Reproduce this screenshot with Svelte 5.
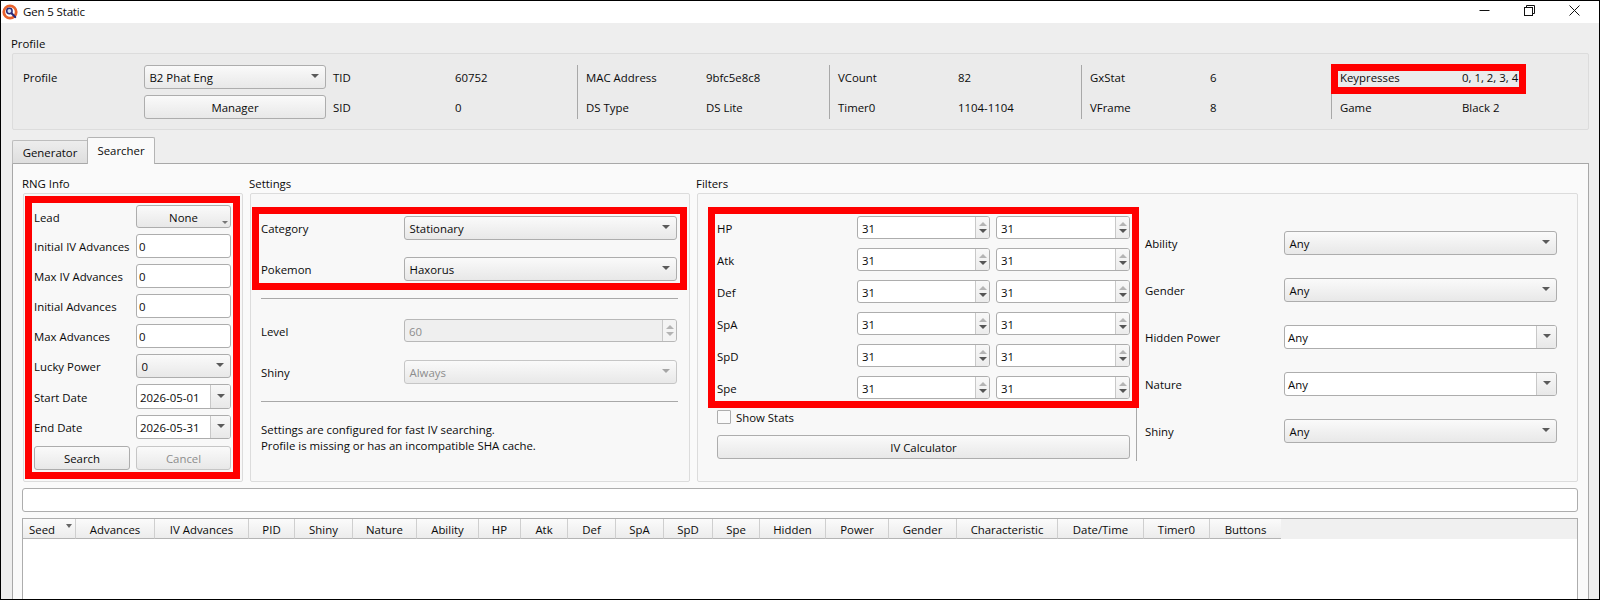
<script>
	const infoBlocks = [
		{ a: 'MAC Address', av: '9bfc5e8c8', b: 'DS Type', bv: 'DS Lite' },
		{ a: 'VCount', av: '82', b: 'Timer0', bv: '1104-1104' },
		{ a: 'GxStat', av: '6', b: 'VFrame', bv: '8' },
		{ a: 'Keypresses', av: '0, 1, 2, 3, 4', b: 'Game', bv: 'Black 2' }
	];
	const advances = ['Initial IV Advances', 'Max IV Advances', 'Initial Advances', 'Max Advances'];
	const stats = ['HP', 'Atk', 'Def', 'SpA', 'SpD', 'Spe'];
	const extras = [
		{ label: 'Ability', editable: false },
		{ label: 'Gender', editable: false },
		{ label: 'Hidden Power', editable: true },
		{ label: 'Nature', editable: true },
		{ label: 'Shiny', editable: false }
	];
	const columns = [
		['Advances', 79], ['IV Advances', 94], ['PID', 46], ['Shiny', 58], ['Nature', 64], ['Ability', 62],
		['HP', 42], ['Atk', 47], ['Def', 48], ['SpA', 48], ['SpD', 49], ['Spe', 47], ['Hidden', 66],
		['Power', 63], ['Gender', 68], ['Characteristic', 101], ['Date/Time', 86], ['Timer0', 66], ['Buttons', 71]
	];
</script>

{#snippet combo(text, disabled = false)}
	<div class="combo" class:disabled>
		<span>{text}</span>
		<i class="arrow"></i>
	</div>
{/snippet}

{#snippet editCombo(text, btn = 20)}
	<div class="edit-combo">
		<span>{text}</span>
		<div class="drop" style="width: {btn}px"><i class="arrow"></i></div>
	</div>
{/snippet}

{#snippet spin(text, disabled = false)}
	<div class="spin" class:disabled>
		<span>{text}</span>
		<div class="spin-btns">
			<i class="up"></i>
			<i class="down" class:faint={disabled}></i>
		</div>
	</div>
{/snippet}

<div class="window">
	<header class="titlebar">
		<svg class="app-icon" width="16" height="16" viewBox="0 0 16 16">
			<circle cx="8" cy="8" r="6.2" fill="#fff" stroke="#e8622c" stroke-width="2.8" />
			<circle cx="7.4" cy="7" r="2.7" fill="#cfe0f2" stroke="#2b2a78" stroke-width="1.5" />
			<path d="M9.5 9.2 L13.2 13" stroke="#2b2a78" stroke-width="2.2" stroke-linecap="round" />
		</svg>
		<div class="title">Gen 5 Static</div>
		<div class="controls">
			<svg width="45" height="11" viewBox="0 0 45 11"><path d="M17.5 5.5 H27.5" stroke="#111" /></svg>
			<svg width="45" height="11" viewBox="0 0 45 11" fill="none" stroke="#111">
				<rect x="17.5" y="2.5" width="8" height="8" />
				<path d="M19.5 2.5 V0.5 H27.5 V8.5 H25.5" />
			</svg>
			<svg width="45" height="11" viewBox="0 0 45 11" fill="none" stroke="#111">
				<path d="M17.5 0.5 L27.5 10.5 M27.5 0.5 L17.5 10.5" />
			</svg>
		</div>
	</header>

	<main class="page">
		<div class="legend profile-legend">Profile</div>
		<section class="box profile">
			<div class="profile-main">
				<span>Profile</span>
				{@render combo('B2 Phat Eng')}
				<span></span>
				<button class="btn">Manager</button>
			</div>
			<div class="info first">
				<span>TID</span><span>60752</span>
				<span>SID</span><span>0</span>
			</div>
			{#each infoBlocks as b}
				<div class="info">
					<span>{b.a}</span><span>{b.av}</span>
					<span>{b.b}</span><span>{b.bv}</span>
				</div>
			{/each}
		</section>

		<nav class="tabs">
			<div class="tab">Generator</div>
			<div class="tab active">Searcher</div>
		</nav>

		<div class="pane">
			<div class="columns">
				<div>
					<div class="legend">RNG Info</div>
					<section class="box panel rng">
						<span>Lead</span>
						<button class="btn lead">None<i class="menu-arrow"></i></button>
						{#each advances as label}
							<span>{label}</span>
							<div class="edit">0</div>
						{/each}
						<span>Lucky Power</span>
						{@render combo('0')}
						<span>Start Date</span>
						{@render editCombo('2026-05-01')}
						<span>End Date</span>
						{@render editCombo('2026-05-31')}
						<button class="btn search">Search</button>
						<button class="btn search off">Cancel</button>
					</section>
				</div>

				<div>
					<div class="legend">Settings</div>
					<section class="box panel settings">
						<div class="form top">
							<span>Category</span>
							{@render combo('Stationary')}
							<span>Pokemon</span>
							{@render combo('Haxorus')}
						</div>
						<div class="rule first-rule"></div>
						<div class="form lower">
							<span>Level</span>
							{@render spin('60', true)}
							<span>Shiny</span>
							{@render combo('Always', true)}
						</div>
						<div class="rule"></div>
						<p class="note">
							Settings are configured for fast IV searching.<br />
							Profile is missing or has an incompatible SHA cache.
						</p>
					</section>
				</div>

				<div>
					<div class="legend">Filters</div>
					<section class="box panel filters">
						<div class="iv-side">
							<div class="iv-grid">
								{#each stats as s}
									<span>{s}</span>
									{@render spin('31')}
									{@render spin('31')}
								{/each}
							</div>
							<div class="check"><i></i><span>Show Stats</span></div>
							<button class="btn calc">IV Calculator</button>
						</div>
						<div class="vrule"></div>
						<div class="extra-grid">
							{#each extras as e}
								<span>{e.label}</span>
								{#if e.editable}
									{@render editCombo('Any')}
								{:else}
									{@render combo('Any')}
								{/if}
							{/each}
						</div>
					</section>
				</div>
			</div>

			<div class="edit progress"></div>

			<div class="table">
				<div class="thead">
					<div class="th seed"><span>Seed</span><i class="arrow"></i></div>
					{#each columns as [name, width]}
						<div class="th" style="width: {width}px"><span>{name}</span></div>
					{/each}
				</div>
			</div>
		</div>
	</main>

	<div class="mark" style="left: 1330px; top: 63px; width: 195px; height: 30px"></div>
	<div class="mark" style="left: 24px; top: 195px; width: 215px; height: 283px"></div>
	<div class="mark" style="left: 251px; top: 206px; width: 435px; height: 83px"></div>
	<div class="mark" style="left: 707px; top: 206px; width: 431px; height: 201px"></div>
</div>

<style>
	:global(body) { margin: 0; }
	.window {
		position: relative;
		box-sizing: border-box;
		width: 1600px;
		height: 600px;
		border: 1px solid #000;
		overflow: hidden;
		display: flex;
		flex-direction: column;
		background: #eeeeee;
		color: #0a0a0a;
		font: 11.4px/16px "Open Sans", "Noto Sans", sans-serif;
	}
	/* text sits a pixel low in its row, like the native widgets */
	span { padding-top: 2px; }
	.titlebar {
		height: 22px;
		flex: none;
		display: flex;
		align-items: center;
		padding-left: 1px;
		background: #fff;
	}
	.title { font-size: 11.5px; letter-spacing: -0.15px; }
	.app-icon { margin-right: 5px; }
	.controls {
		margin-left: auto;
		margin-right: 2px;
		margin-top: -4px;
		display: flex;
		align-items: center;
		height: 11px;
	}
	.controls svg { display: block; }

	.page {
		flex: 1;
		min-height: 0;
		display: flex;
		flex-direction: column;
		padding: 12px 10px 0 11px;
	}
	.legend { height: 16px; margin: 0 0 1px -1px; white-space: nowrap; }
	.profile-legend { height: 18px; margin-bottom: 0; line-height: 18px; }
	.box {
		box-sizing: border-box;
		border: 1px solid #dcdcdc;
		border-radius: 2px;
	}
	.profile {
		height: 77px;
		flex: none;
		display: flex;
		padding: 11px 0 0 10px;
		background: #ebebeb;
	}
	.profile-main {
		width: 310px;
		display: grid;
		grid-template-columns: 121px 182px;
		grid-template-rows: 24px 24px;
		row-gap: 6px;
		align-items: center;
	}
	.info {
		box-sizing: border-box;
		width: 252px;
		height: 54px;
		padding-left: 8px;
		border-left: 1px solid #a8a8a8;
		display: grid;
		grid-template-columns: 120px 1fr;
		grid-template-rows: 24px 24px;
		row-gap: 6px;
		align-items: center;
	}
	.info.first { width: 244px; padding: 0; border: 0; grid-template-columns: 122px 1fr; }
	.info:nth-child(5) { width: 250px; }
	.info:last-child { grid-template-columns: 122px 1fr; }

	.combo, .btn, .edit, .edit-combo, .spin {
		box-sizing: border-box;
		border: 1px solid #adadad;
		border-radius: 3px;
		height: 100%;
		min-width: 0;
		display: flex;
		align-items: center;
		font: inherit;
		color: inherit;
	}
	.combo, .btn { background: linear-gradient(#fafafa, #e8e8e8); }
	.combo { padding: 0 6px 0 4.5px; justify-content: space-between; }
	.combo.disabled { color: #8d8d8d; border-color: #c6c6c6; }
	.combo.disabled .arrow { border-top-color: #a5a5a5; }
	.arrow {
		width: 0;
		height: 0;
		margin-top: -2px;
		border: 4px solid transparent;
		border-top: 4px solid #5a5a5a;
		border-bottom: 0;
	}
	.btn { justify-content: center; padding: 2px 0 0; position: relative; }
	.btn.off { color: #8d8d8d; border-color: #c6c6c6; }
	.lead { height: 23px; }
	.menu-arrow {
		position: absolute;
		right: 2px;
		bottom: 3px;
		border: 3px solid transparent;
		border-top: 3px solid #777;
		border-bottom: 0;
	}
	.edit { background: #fff; padding: 2px 0 0 2px; }
	.edit-combo { background: #fff; padding-left: 3px; justify-content: space-between; overflow: hidden; }
	.drop {
		box-sizing: border-box;
		height: 100%;
		flex: none;
		display: flex;
		align-items: center;
		justify-content: center;
		border-left: 1px solid #c8c8c8;
		background: linear-gradient(#f8f8f8, #e8e8e8);
	}
	.spin { background: #fff; padding-left: 4px; justify-content: space-between; overflow: hidden; }
	.spin.disabled { background: #efefef; color: #8d8d8d; border-color: #b8b8b8; }
	.spin.disabled .spin-btns { background: #f4f4f4; }
	.spin-btns {
		box-sizing: border-box;
		width: 14px;
		height: 100%;
		flex: none;
		display: flex;
		flex-direction: column;
		align-items: center;
		justify-content: center;
		gap: 3px;
		border-left: 1px solid #c8c8c8;
		background: linear-gradient(#f8f8f8, #ececec);
	}
	.up, .down { border: 4px solid transparent; width: 0; height: 0; }
	.up { border-top: 0; border-bottom: 4px solid #b4b4b4; }
	.down { border-bottom: 0; border-top: 4px solid #555; }
	.down.faint { border-top-color: #b4b4b4; }

	.tabs {
		flex: none;
		height: 27px;
		margin-top: 7px;
		margin-bottom: -1px;
		display: flex;
		align-items: flex-end;
		position: relative;
		z-index: 1;
	}
	.tab {
		box-sizing: border-box;
		height: 24px;
		width: 75px;
		padding-top: 2px;
		display: flex;
		align-items: center;
		justify-content: center;
		border: 1px solid #bdbdbd;
		border-right: 0;
		border-bottom: 1px solid #a8a8a8;
		border-radius: 2px 0 0 0;
		background: linear-gradient(#ededed, #dedede);
	}
	.tab.active {
		height: 27px;
		width: 68px;
		padding: 0;
		border: 1px solid #b4b4b4;
		border-bottom: 0;
		border-radius: 2px 2px 0 0;
		background: #fafafa;
	}
	.pane {
		flex: 1;
		min-height: 0;
		display: flex;
		flex-direction: column;
		padding: 12px 10px 0;
		border: 1px solid #a8a8a8;
		border-bottom: 0;
		background: #fafafa;
	}
	.columns {
		flex: none;
		display: grid;
		grid-template-columns: 220px 440px 881px;
		column-gap: 7px;
	}
	.panel { height: 289px; background: #f8f8f8; }

	.rng {
		padding: 11px 0 0 10px;
		display: grid;
		grid-template-columns: 96px 95px;
		grid-template-rows: 23px repeat(5, 24px) 25px 24px 24px;
		gap: 6px;
		align-items: center;
		white-space: nowrap;
	}
	.search { height: 24px; margin-top: 1px; }

	.settings { padding: 22px 0 0 10px; }
	.form {
		display: grid;
		grid-template-columns: 143px 273px;
		align-items: center;
	}
	.form.top { grid-template-rows: 24px 24px; row-gap: 17px; }
	.form.lower { grid-template-rows: 23px 24px; row-gap: 18px; }
	.rule { width: 417px; height: 1px; margin-top: 17px; background: #a8a8a8; }
	.first-rule { margin-bottom: 20px; }
	.note { margin: 20px 0 0; }

	.filters { padding: 22px 0 0 19px; display: flex; }
	.iv-side { width: 413px; flex: none; }
	.iv-grid {
		display: grid;
		grid-template-columns: 140px 133px 140px;
		grid-auto-rows: 23px;
		row-gap: 9px;
		align-items: center;
	}
	.iv-grid :global(.spin:nth-child(3n)) { margin-left: 6px; }
	.check {
		height: 14px;
		margin-top: 11px;
		display: flex;
		align-items: center;
		gap: 5px;
	}
	.check i {
		box-sizing: border-box;
		width: 14px;
		height: 14px;
		border: 1px solid #adadad;
		border-radius: 1px;
		background: #fafafa;
	}
	.calc { height: 24px; width: 413px; margin-top: 11px; }
	.vrule { width: 1px; height: 245px; margin-left: 6px; flex: none; background: #a8a8a8; }
	.extra-grid {
		padding: 15px 0 0 8px;
		display: grid;
		grid-template-columns: 139px 273px;
		grid-auto-rows: 24px;
		row-gap: 23px;
		align-items: center;
		align-content: start;
	}

	.progress {
		flex: none;
		height: 24px;
		margin: 6px 0 0 -1px;
		width: 1556px;
	}
	.table {
		flex: 1;
		margin: 6px 0 0 -1px;
		width: 1556px;
		box-sizing: border-box;
		border: 1px solid #adadad;
		border-bottom: 0;
		background: #fff;
	}
	.thead { display: flex; height: 20px; background: #f0f0f0; }
	.th {
		box-sizing: border-box;
		height: 20px;
		flex: none;
		display: flex;
		align-items: center;
		justify-content: center;
		border-right: 1px solid #cfcfcf;
		border-bottom: 1px solid #b4b4b4;
		background: linear-gradient(#fbfbfb, #ececec);
	}
	.th:last-child { border-right: 0; }
	.th.seed { width: 53px; justify-content: space-between; padding: 0 3px 0 6px; }
	.th .arrow { margin-top: -6px; border-top-color: #666; border-width: 3px; border-top-width: 4px; border-bottom: 0; }

	.mark {
		position: absolute;
		box-sizing: border-box;
		border: 7px solid #ff0000;
		pointer-events: none;
	}
</style>
